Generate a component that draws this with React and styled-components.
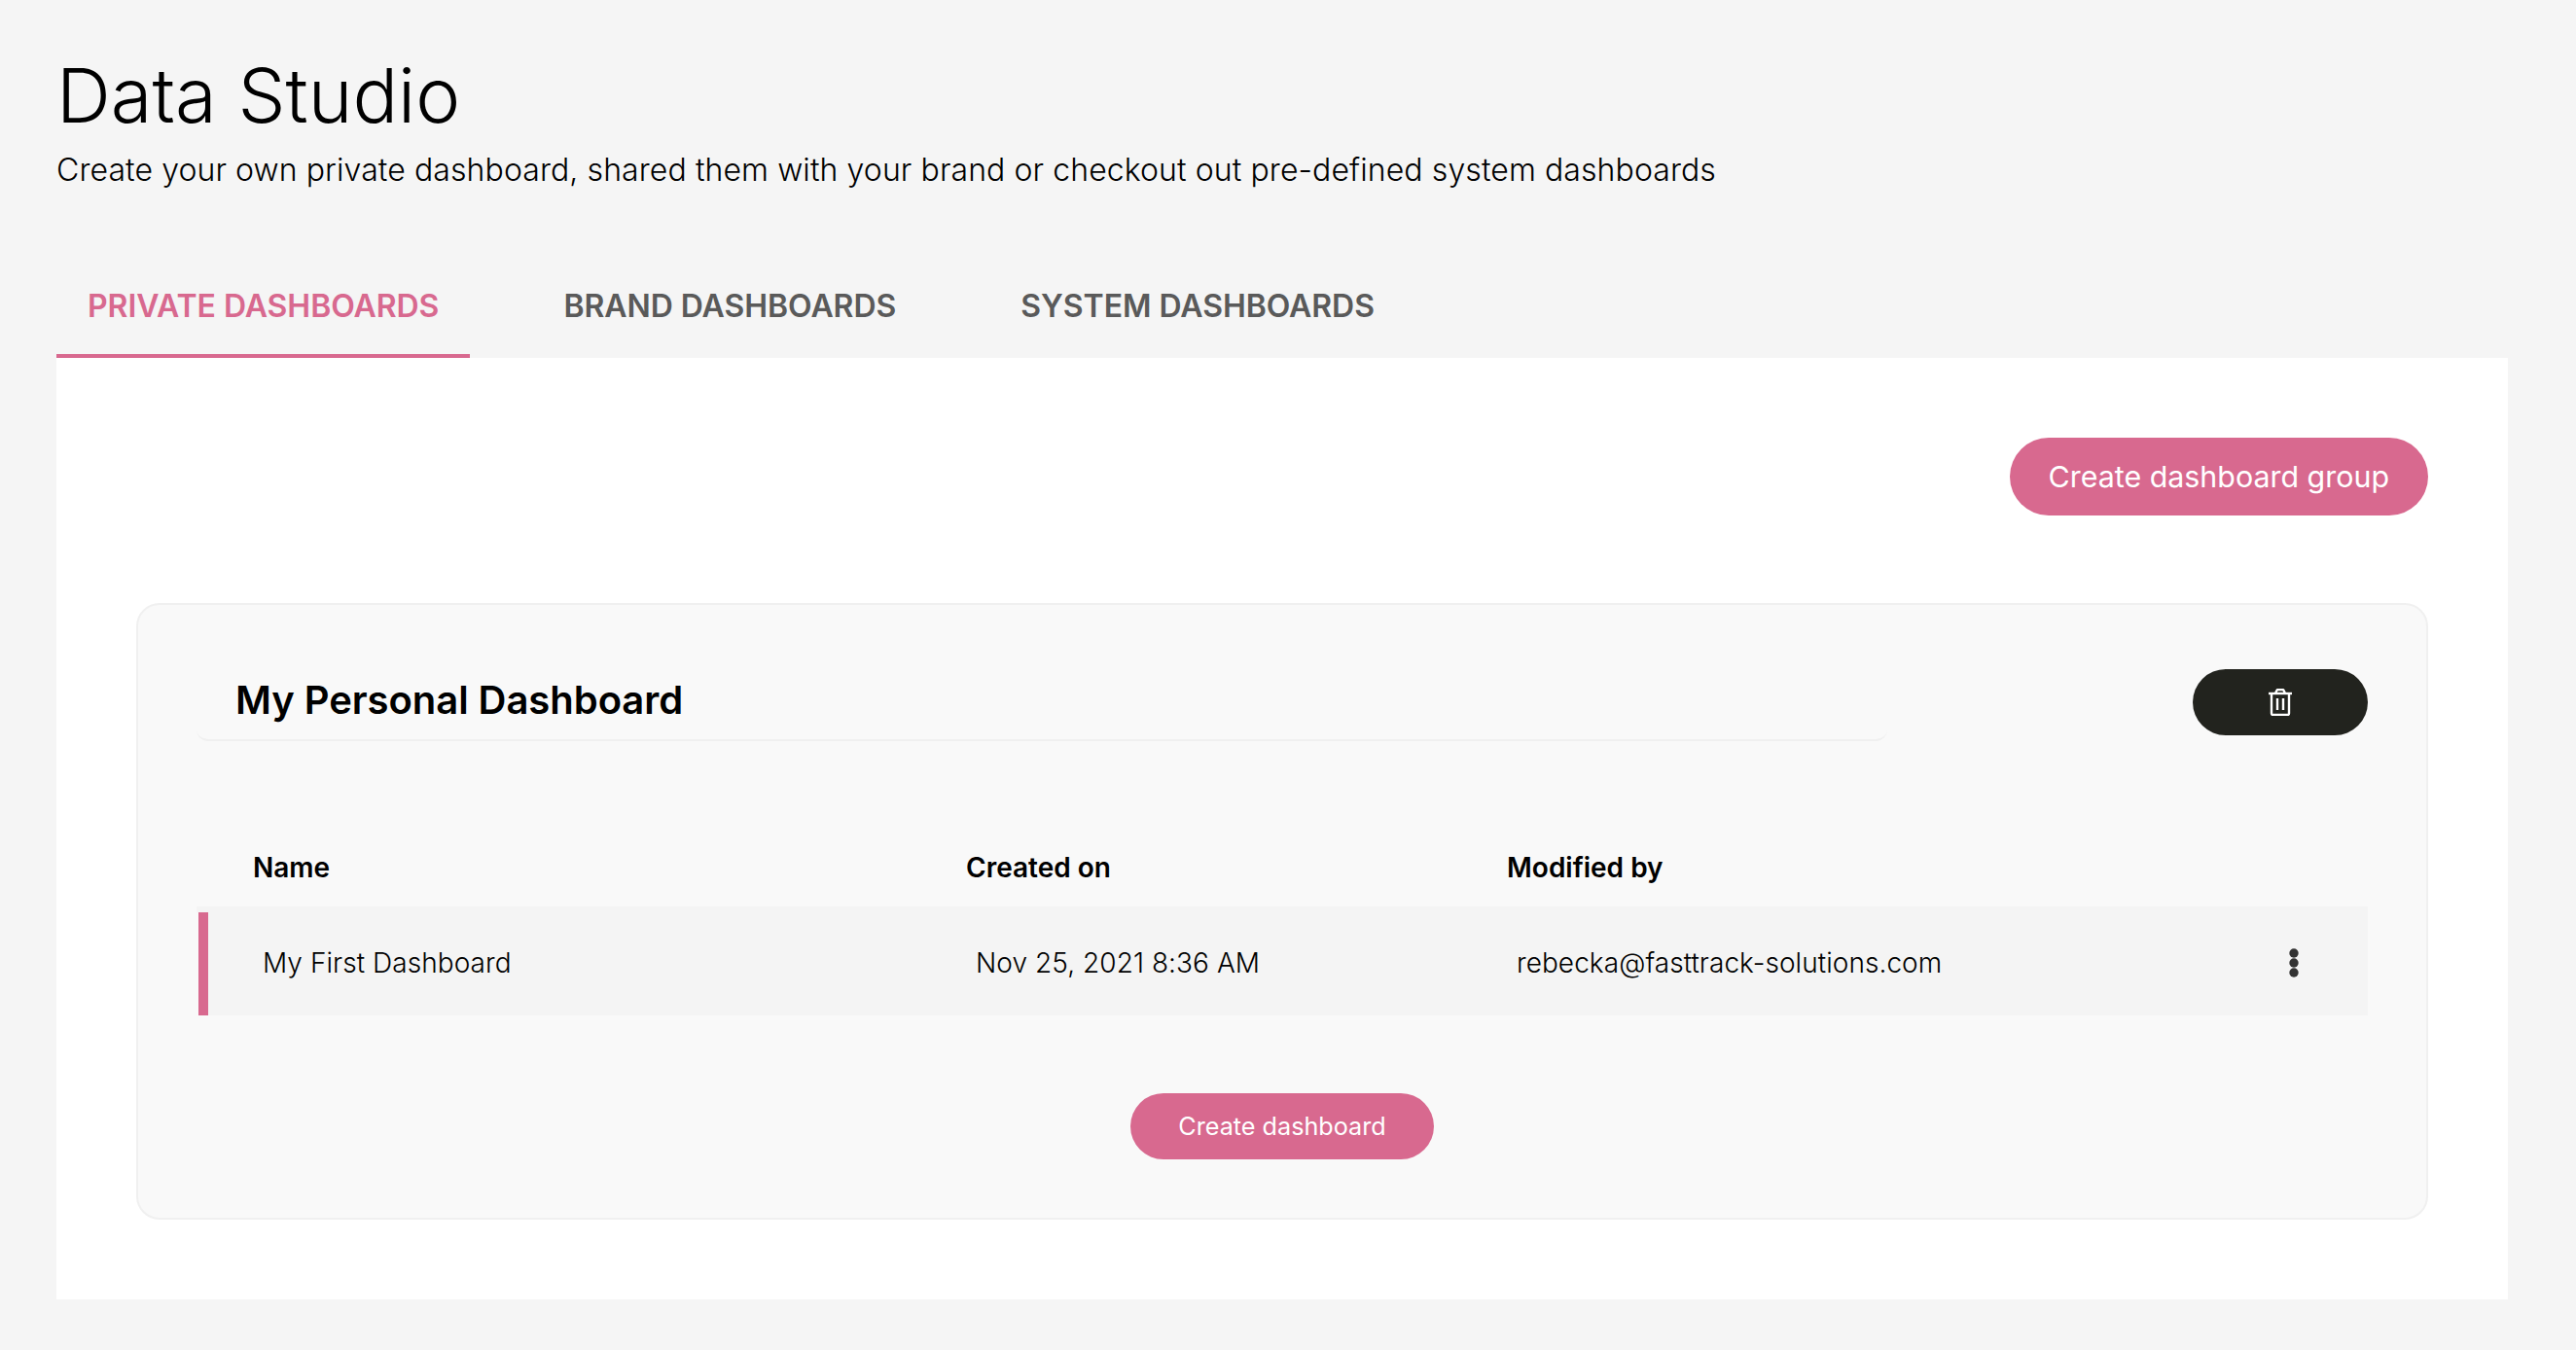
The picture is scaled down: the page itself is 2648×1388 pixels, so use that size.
import React from "react";
import styled, { createGlobalStyle } from "styled-components";

const GlobalStyle = createGlobalStyle`
  html, body {
    margin: 0;
    padding: 0;
    background: #f5f5f5;
    font-family: Inter, "Liberation Sans", sans-serif;
    color: #000;
  }
`;

const pink = "#d8698f";

const Page = styled.div`
  width: 2648px;
  height: 1388px;
  box-sizing: border-box;
  padding: 0 70px 0 58px;
  overflow: hidden;
`;

const Header = styled.header`
  padding-top: 52px;
`;

const Title = styled.h1`
  margin: 0;
  font-size: 77.6px;
  line-height: 92px;
  font-weight: 300;
`;

const Subtitle = styled.p`
  margin: 11px 0 0;
  font-size: 32px;
  line-height: 40px;
  font-weight: 300;
  letter-spacing: 0.09px;
`;

const Tabs = styled.nav`
  display: flex;
  gap: 64px;
  margin-top: 73px;
`;

const Tab = styled.div`
  height: 100px;
  box-sizing: border-box;
  padding: 0 32px 4px;
  display: flex;
  align-items: center;
  font-size: 32px;
  font-weight: 600;
  letter-spacing: -0.05px;
  color: ${(p) => (p.$active ? pink : "#5a5a5a")};
  border-bottom: 4px solid ${(p) => (p.$active ? pink : "transparent")};
`;

const Panel = styled.main`
  background: #fff;
  padding: 82px;
`;

const Actions = styled.div`
  display: flex;
  justify-content: flex-end;
`;

const PinkButton = styled.button`
  border: 0;
  background: ${pink};
  color: #fff;
  font-family: inherit;
  font-weight: 400;
  font-size: ${(p) => (p.$small ? "25.2px" : "30.4px")};
  height: ${(p) => (p.$small ? "68px" : "80px")};
  padding: 0 ${(p) => (p.$small ? "49.5px" : "40px")};
  border-radius: 40px;
`;

const Card = styled.section`
  margin-top: 90px;
  background: #f9f9f9;
  border: 2px solid #f0f0f0;
  border-radius: 24px;
  padding: 66px 60px 60px;
`;

const CardTop = styled.div`
  display: flex;
  justify-content: space-between;
  align-items: flex-start;
`;

const CardTitle = styled.h2`
  width: 1738px;
  box-sizing: border-box;
  height: 74px;
  margin: 0;
  padding: 8px 0 0 40px;
  font-size: 40px;
  line-height: 48px;
  font-weight: 600;
  letter-spacing: -0.05px;
  border-bottom: 2px solid #f0f0f0;
  border-radius: 0 0 12px 12px;
`;

const TrashButton = styled.button`
  width: 180px;
  height: 68px;
  border: 0;
  border-radius: 34px;
  background: #22231e;
  display: flex;
  align-items: center;
  justify-content: center;
`;

const TableHead = styled.div`
  margin-top: 90px;
  height: 86px;
  box-sizing: border-box;
  padding-left: 58px;
  display: grid;
  grid-template-columns: 733px 556px 1fr;
  align-items: center;
  border-bottom: 6px solid #f4f4f4;
  font-size: 28px;
  font-weight: 600;
`;

const TableRow = styled.div`
  margin-left: 2px;
  height: 106px;
  box-sizing: border-box;
  background: #f4f4f4;
  border-left: 10px solid ${pink};
  padding: 0 71px 2px 56px;
  display: grid;
  grid-template-columns: 733px 556px 1fr 10px;
  align-items: center;
  font-size: 28px;
  font-weight: 300;
  letter-spacing: 0.06px;
`;

const CardFooter = styled.div`
  margin-top: 80px;
  display: flex;
  justify-content: center;
`;

const TrashIcon = () => (
  <svg width="24" height="28" viewBox="0 0 24 28" fill="none" stroke="#fff" strokeWidth="2.4">
    <path d="M0 5h24" />
    <path d="M7 5l1.5-3.2q.4-.8 1.3-.8h4.4q.9 0 1.3.8L17 5" />
    <path d="M3 5v20.5q0 1.5 1.5 1.5h15q1.5 0 1.5-1.5V5" />
    <path d="M9 10v12M15 10v12" />
  </svg>
);

const DotsIcon = () => (
  <svg width="10" height="30" viewBox="0 0 10 30" fill="#333">
    <circle cx="5" cy="5" r="4.7" />
    <circle cx="5" cy="15" r="4.7" />
    <circle cx="5" cy="25" r="4.7" />
  </svg>
);

export default function App() {
  return (
    <Page>
      <GlobalStyle />
      <Header>
        <Title>Data Studio</Title>
        <Subtitle>
          Create your own private dashboard, shared them with your brand or checkout out pre-defined system dashboards
        </Subtitle>
      </Header>
      <Tabs>
        <Tab $active>PRIVATE DASHBOARDS</Tab>
        <Tab>BRAND DASHBOARDS</Tab>
        <Tab>SYSTEM DASHBOARDS</Tab>
      </Tabs>
      <Panel>
        <Actions>
          <PinkButton>Create dashboard group</PinkButton>
        </Actions>
        <Card>
          <CardTop>
            <CardTitle>My Personal Dashboard</CardTitle>
            <TrashButton>
              <TrashIcon />
            </TrashButton>
          </CardTop>
          <TableHead>
            <div>Name</div>
            <div>Created on</div>
            <div>Modified by</div>
          </TableHead>
          <TableRow>
            <div>My First Dashboard</div>
            <div>Nov 25, 2021 8:36 AM</div>
            <div>rebecka@fasttrack-solutions.com</div>
            <DotsIcon />
          </TableRow>
          <CardFooter>
            <PinkButton $small>Create dashboard</PinkButton>
          </CardFooter>
        </Card>
      </Panel>
    </Page>
  );
}
